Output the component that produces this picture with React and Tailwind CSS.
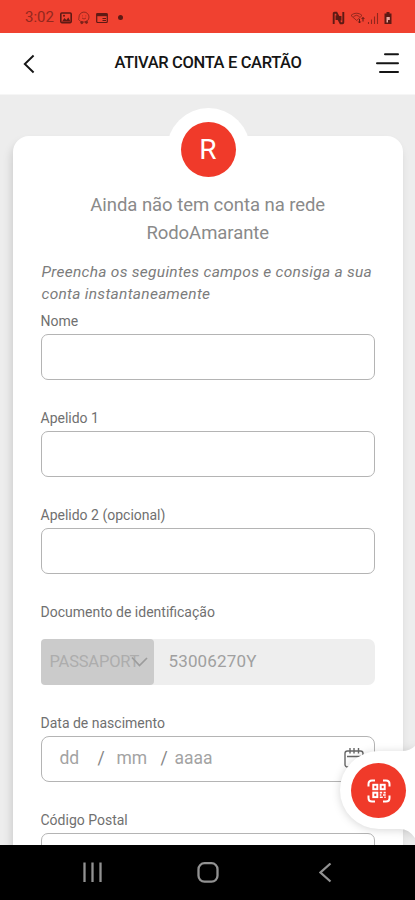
import React from "react";

const StatusBar = () => (
  <div className="h-[33px] shrink-0 bg-[#f04130] flex items-center justify-between pl-[25px] pr-[22px] pt-[2px] text-[#5e1a14]">
    <div className="flex items-center">
      <span className="w-[30px] text-[15px] leading-none text-[#93281e] whitespace-nowrap">3:02</span>
      {/* notificações */}
      <svg className="ml-[4px]" width="14" height="14" viewBox="0 0 14 14">
        <rect x="1.8" y="2" width="10.4" height="9.6" rx="1" fill="none" stroke="currentColor" strokeWidth="1.6" />
        <path d="M3 10.5 5.5 7l1.8 2 2-2.6L11.5 10.5z" fill="currentColor" />
        <circle cx="5" cy="4.8" r="1" fill="currentColor" />
      </svg>
      <svg className="ml-[4px] opacity-80" width="14" height="14" viewBox="0 0 14 14" fill="none" stroke="currentColor">
        <path d="M2.5 9.5C1 8.5 2 8 2 6.2A5 5 0 0 1 12 6c0 3-2.2 5-5 5-2 0-3.600-.5-4.500-1.500" strokeWidth=".8" />
        <path d="M5 7q2 2 4 0M5.500 4.500v.8M8.800 4.500v.8" strokeWidth=".7" />
        <circle cx="4.800" cy="11.600" r="1.100" fill="currentColor" />
        <circle cx="9.500" cy="11.300" r="1.100" fill="currentColor" />
      </svg>
      <svg className="ml-[4px]" width="14" height="14" viewBox="0 0 14 14">
        <rect x="1.700" y="2.500" width="10.600" height="9" rx="1" fill="none" stroke="currentColor" strokeWidth="1.200" />
        <path d="M1.500 2.500h11v2.700h-11z" fill="currentColor" />
        <path d="M7.500 7.500h3.500M7.500 9.500h3.500" stroke="currentColor" fill="none" />
      </svg>
      <span className="ml-[9px] size-[5px] rounded-full bg-[#5e1a14]" />
    </div>
    <div className="flex items-center">
      <svg width="13" height="14" viewBox="0 0 13 14" fill="none" stroke="currentColor">
        <path d="M1.700 13V2.500Q1.700 1.700 2.500 1.700h2L8.500 9.500V5M11.300 1v10.500q0 .8-.8.800h-2L4.500 4.500V9" strokeWidth="1.900" />
      </svg>
      <svg className="ml-[5px]" width="17" height="14" viewBox="0 0 17 14" fill="none" stroke="currentColor">
        <path d="M1 4.500C4 1.500 9 1.500 12 4.500L6.700 9.500zM3.500 5.500q3-2.500 6 0" strokeWidth=".8" opacity=".8" />
        <path d="M9.500 8v4M8.300 10.500l1.200 1.500 1.200-1.500M13 10.500V6.500M11.600 8 13 6.500 14.400 8" />
      </svg>
      <svg width="12" height="14" viewBox="0 0 12 14" stroke="currentColor" opacity=".65">
        <path d="M1.500 11v2M4.500 8.500V13M7.500 5.500V13M10.500 2v11" strokeWidth="1.100" />
      </svg>
      <svg className="ml-[4px]" width="10" height="14" viewBox="0 0 10 14">
        <path d="M3.500 1h3v1.500h2V13h-7V2.500h2z" fill="currentColor" />
        <path d="M3.500 6h3.300v3H5v2.500H3.500z" fill="#e9a79f" />
      </svg>
    </div>
  </div>
);

const Header = () => (
  <header className="h-[62px] shrink-0 bg-white flex items-center justify-between pl-[23px] pr-[15px] border-b border-[#f6f6f6] text-[#151515]">
    <svg width="12" height="20" viewBox="0 0 12 20" fill="none" stroke="currentColor" strokeWidth="1.900">
      <path d="M10.600 1.500 1.800 10l8.800 8.500" />
    </svg>
    <h1 className="pl-[6px] text-[16.500px] font-medium tracking-[-0.350px] whitespace-nowrap">
      ATIVAR CONTA E CARTÃO
    </h1>
    <svg width="25" height="22" viewBox="0 0 25 22" stroke="currentColor" strokeWidth="2" strokeLinecap="round">
      <path d="M10 1.300h13M2 10.200h21M5 19h18" />
    </svg>
  </header>
);

const Label = ({ children }) => (
  <label className="block h-[20px] text-[14px] leading-[20px] text-[#707070] whitespace-nowrap">
    {children}
  </label>
);

const Field = ({ label }) => (
  <div className="h-[97px]">
    <Label>{label}</Label>
    <div className="mt-[3px] h-[46px] rounded-[7px] border border-[#b4b4b4]" />
  </div>
);

const ScanButton = () => (
  <div className="absolute right-0 bottom-[4px] h-[102px] w-[75px]">
    {/* aba branca com cantos côncavos junto à margem */}
    <svg className="absolute inset-0 overflow-visible drop-shadow-[0_1px_4px_rgba(0,0,0,0.16)]" width="75" height="102" viewBox="0 0 75 102">
      <path d="M75 7Q70 12 62 12H39A39 39 0 0 0 39 90H60Q69 90 75 99z" fill="#fff" />
    </svg>
    <div className="absolute left-[11px] top-[24px] size-[55px] rounded-full bg-[#f03a2a] flex items-center justify-center">
      <svg width="24" height="24" viewBox="0 0 24 24" fill="none" stroke="#fff" strokeWidth="2">
        <path d="M1.500 7.500V5Q1.500 1.500 5 1.500H8M16 1.500h3Q22.500 1.500 22.500 5v2.500M22.500 16.500V19q0 3.500-3.500 3.500h-3M8 22.500H5Q1.500 22.500 1.500 19v-2.500" />
        <rect x="6.300" y="5.800" width="4" height="4.400" />
        <rect x="13.700" y="5.800" width="4" height="4.400" />
        <rect x="6.300" y="13.700" width="4" height="4.400" />
        <path d="M12.800 13.600h2.400M16.600 13.600h2.100M12.800 16h1.600M16 16h2.700M12.800 18.300h3M17.300 18.300h1.400" strokeWidth="1.600" />
      </svg>
    </div>
  </div>
);

const NavBar = () => (
  <nav className="h-[55px] shrink-0 bg-black flex items-center justify-between pl-[82px] pr-[83px] text-[#929292]">
    <svg width="21" height="22" viewBox="0 0 21 22" stroke="currentColor" strokeWidth="2.300">
      <path d="M2.500 .5v19.500M10.500 .5v19.500M18.500 .5v19.500" />
    </svg>
    <svg className="mr-[6px]" width="22" height="22" viewBox="0 0 22 22" fill="none" stroke="currentColor" strokeWidth="2.300">
      <rect x="1.500" y="1.200" width="19" height="18.500" rx="6" />
    </svg>
    <svg width="13" height="20" viewBox="0 0 13 20" fill="none" stroke="currentColor" strokeWidth="2.200">
      <path d="M11.500 .5 1.500 9.500l10 9" />
    </svg>
  </nav>
);

const App = () => {
  return (
    <div className="h-[900px] w-[415px] flex flex-col overflow-hidden font-[Roboto,sans-serif]">
      <StatusBar />
      <Header />

      <main className="relative flex-1 overflow-hidden bg-[#ededed] pt-[41px] pl-[12.500px] pr-[12px]">
        <div className="relative h-[760px] rounded-t-[16px] bg-white px-[28px] shadow-[-2px_6px_9px_rgba(0,0,0,0.13)]">
          {/* emblema */}
          <div className="absolute left-[154px] top-[-28px] size-[83px] rounded-full bg-white flex items-center justify-center">
            <div className="size-[55px] rounded-full bg-[#f03a2a] flex items-center justify-center text-[28px] text-white">
              R
            </div>
          </div>

          <h2 className="pt-[55px] text-center text-[18.500px] leading-[28px] tracking-[-0.050px] text-[#8a8a8a]">
            Ainda não tem conta na rede
            <br />
            RodoAmarante
          </h2>
          <p className="mt-[14px] pl-px text-[15.500px] leading-[22px] tracking-[0.280px] italic text-[#7c7c7c] whitespace-nowrap">
            Preencha os seguintes campos e consiga a sua
            <br />
            conta instantaneamente
          </p>

          <div className="mt-[6px]">
            <Field label="Nome" />
            <Field label="Apelido 1" />
            <Field label="Apelido 2 (opcional)" />

            <div className="h-[111px]">
              <Label>Documento de identificação</Label>
              <div className="mt-[17px] h-[46px] flex rounded-[7px] bg-[#eee] text-[17px] text-[#a0a0a0]">
                <div className="relative w-[113px] rounded-[4px] bg-[#cbcbcb] pl-[9px] flex items-center text-[16.500px] text-[#adadad]">
                  <span className="whitespace-nowrap tracking-[-0.200px]">PASSAPORT</span>
                  <svg className="absolute left-[89px] top-[15px]" width="19" height="16" viewBox="0 0 19 16" fill="none" stroke="#9c9c9c" strokeWidth="1.700">
                    <path d="M2 3.500l7.500 8L17 4" />
                  </svg>
                </div>
                <span className="pl-[15px] leading-[45px] tracking-[0.150px]">53006270Y</span>
              </div>
            </div>

            <div className="h-[97px]">
              <Label>Data de nascimento</Label>
              <div className="mt-[3px] h-[46px] rounded-[8px] border border-[#b4b4b4] flex items-center pl-[18px] pr-[10px] pb-[2px] text-[17.500px] text-[#a3a3a3]">
                <span className="w-[38px]">dd</span>
                <span className="w-[19px] text-[#858585]">/</span>
                <span className="w-[44px]">mm</span>
                <span className="w-[14px] text-[#858585]">/</span>
                <span>aaaa</span>
                <svg className="ml-auto" width="20" height="20" viewBox="0 0 20 20" fill="none" stroke="#666" strokeWidth="1.400">
                  <rect x="1" y="3" width="18" height="16" rx="2.500" />
                  <path d="M3 8.500h14M6 0v5.500M10 0v5.500M14.500 0v5.500" />
                </svg>
              </div>
            </div>

            <Field label="Código Postal" />
          </div>
        </div>

        <ScanButton />
      </main>

      <NavBar />
    </div>
  );
};

export default App;
